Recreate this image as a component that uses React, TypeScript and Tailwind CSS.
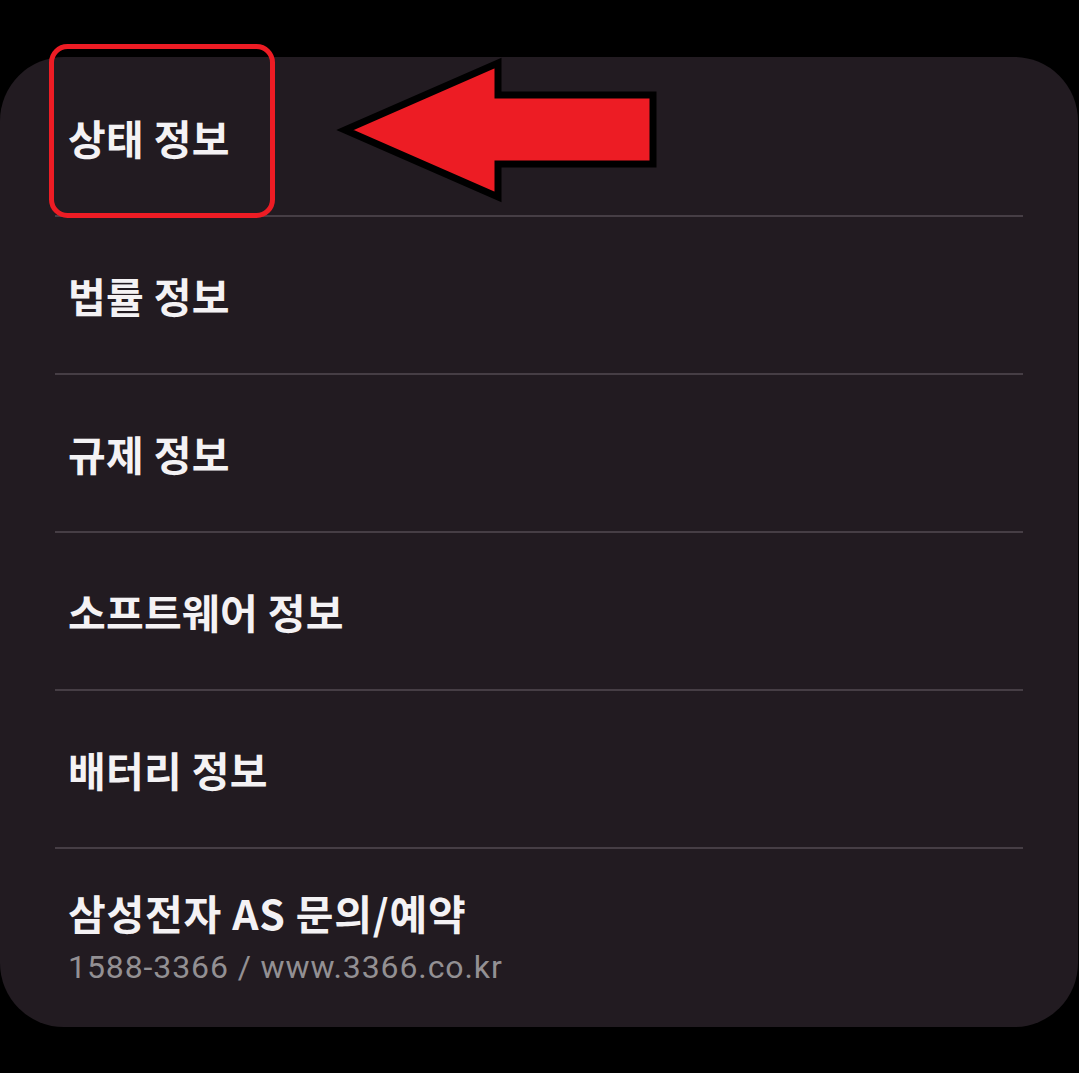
const rows = ["상태 정보", "법률 정보", "규제 정보", "소프트웨어 정보", "배터리 정보"];

function Annotation() {
  return (
    <svg
      className="pointer-events-none absolute left-0 top-0"
      width={1079}
      height={260}
      viewBox="0 0 1079 260"
    >
      <rect
        x={51.5}
        y={46.5}
        width={221}
        height={169}
        rx={16}
        fill="none"
        stroke="#ed1c24"
        strokeWidth={5}
      />
      <polygon
        points="345,130 498,63 498,95 653,95 653,164 498,164 498,197"
        fill="#ed1c24"
        stroke="#000"
        strokeWidth={7}
        strokeLinejoin="miter"
      />
    </svg>
  );
}

export default function App() {
  return (
    <div className="relative min-h-[1073px] w-[1079px] bg-black pt-[57px] [font-family:'Noto_Sans_CJK_KR','Noto_Sans',sans-serif]">
      <div className="h-[970px] w-[1078px] rounded-[64px] bg-[#221b21] px-[55px] pt-[2px]">
        {rows.map((label) => (
          <div
            key={label}
            className="flex h-[158px] items-center border-b-2 border-[#463e45] pl-[13px]"
          >
            <span className="text-[41px] font-bold leading-none tracking-[0.3px] text-[#f4f2f4]">
              {label}
            </span>
          </div>
        ))}
        <div className="flex h-[176px] flex-col justify-center gap-[18px] pl-[13px]">
          <span className="text-[41px] font-bold leading-none tracking-[0.8px] text-[#f4f2f4]">
            삼성전자 AS 문의/예약
          </span>
          <span className="text-[32px] leading-none tracking-[0.9px] text-[#939093] [font-family:Roboto,'Noto_Sans_CJK_KR',sans-serif]">
            1588-3366 / www.3366.co.kr
          </span>
        </div>
      </div>
      <Annotation />
    </div>
  );
}
